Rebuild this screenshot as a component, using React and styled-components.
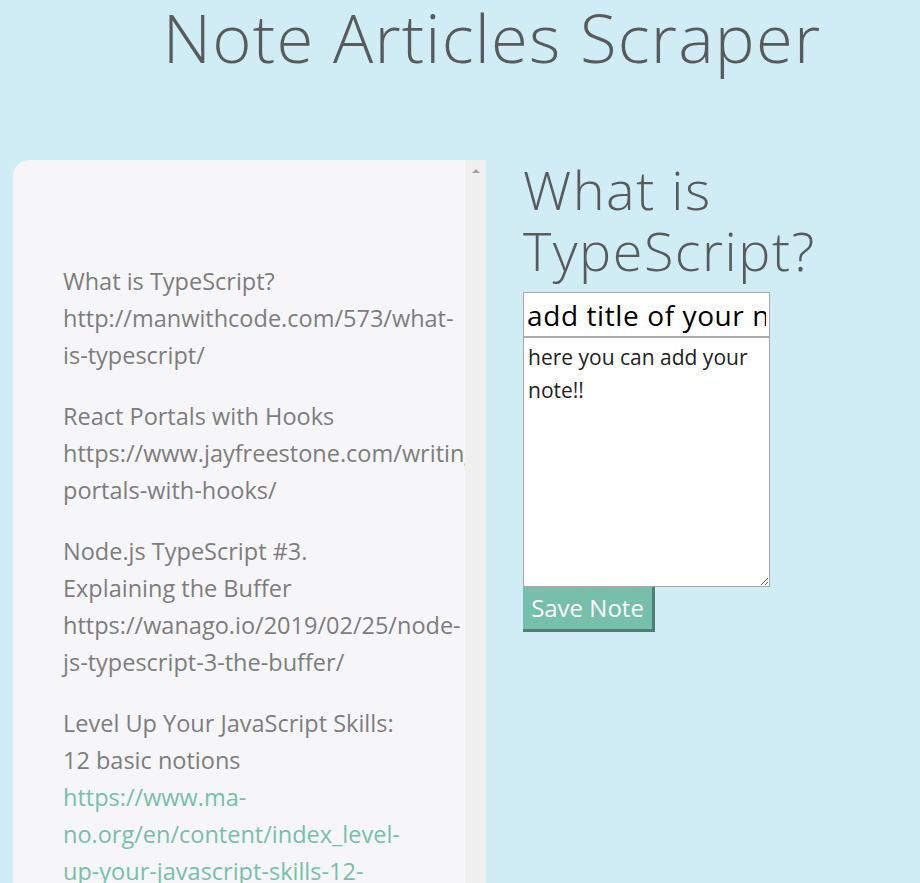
import React from 'react';
import styled, { createGlobalStyle } from 'styled-components';

const GlobalStyle = createGlobalStyle`
body{
    margin: 0;
    background: #d0edf5;
    font-family: "Open Sans", "Noto Sans", sans-serif;
    overflow: hidden;
}
`;

const Page = styled.div`
display: flex;
flex-direction: column;
height: 883px;
overflow: hidden;
`;

const Title = styled.h1`
flex-shrink: 0;
margin: 0;
padding: 0 0 0 64px;
height: 156px;
box-sizing: border-box;
text-align: center;
font-family: "Open Sans", sans-serif;
font-weight: 300;
font-size: 67px;
letter-spacing: 1.2px;
line-height: 74px;
color: #575b5c;
`;

const Main = styled.div`
flex-shrink: 0;
display: flex;
align-items: flex-start;
gap: 37px;
padding-left: 13px;
`;

const Panel = styled.div`
display: flex;
width: 473px;
height: 760px;
margin-top: 4px;
background: #f6f6f8;
border-top-left-radius: 16px;
overflow: hidden;
`;

const List = styled.div`
flex: 1;
padding: 103px 47px 0 50px;
display: flex;
flex-direction: column;
gap: 24px;
min-width: 0;
`;

const Item = styled.div`
font-size: 23.5px;
line-height: 37px;
color: #7d7d7d;
`;

const Url = styled.div`
color: ${props => props.active ? '#76c0ab' : '#7d7d7d'};
`;

const ScrollTrack = styled.div`
width: 21px;
flex-shrink: 0;
background: #f0f0f0;
display: flex;
justify-content: center;
padding-top: 9px;
box-sizing: border-box;
`;

const Arrow = styled.div`
width: 0;
height: 0;
border-left: 4px solid transparent;
border-right: 4px solid transparent;
border-bottom: 4px solid #a3a3a3;
`;

const Editor = styled.div`
display: flex;
flex-direction: column;
`;

const NoteHeading = styled.h2`
margin: 3px 0 11px;
font-family: "Open Sans", sans-serif;
font-weight: 300;
font-size: 54px;
letter-spacing: 1.5px;
line-height: 61px;
color: #575b5c;
width: 320px;
`;

const TitleInput = styled.input`
width: 247px;
height: 45px;
box-sizing: border-box;
border: 1px solid #a9a9a9;
padding: 0 3px;
font-family: "Open Sans", sans-serif;
font-size: 28px;
letter-spacing: 0.6px;
color: #000;
background: #fff;
outline: none;
`;

const NoteArea = styled.textarea`
width: 247px;
height: 250px;
box-sizing: border-box;
border: 1px solid #a9a9a9;
padding: 3px 4px;
font-family: "Open Sans", sans-serif;
font-size: 21px;
line-height: 33px;
color: #222;
resize: both;
outline: none;
`;

const SaveButton = styled.button`
width: 132px;
height: 45px;
box-sizing: border-box;
background: #76c0ab;
color: #fff;
border: none;
border-right: 3px solid #4d7f72;
border-bottom: 3px solid #4d7f72;
font-family: "Open Sans", sans-serif;
font-size: 24px;
padding: 0 0 2px;
text-align: center;
`;

const articles = [
    { title: 'What is TypeScript?', url: 'http://manwithcode.com/573/what-is-typescript/' },
    { title: 'React Portals with Hooks', url: 'https://www.jayfreestone.com/writing/react-portals-with-hooks/' },
    { title: 'Node.js TypeScript #3. Explaining the Buffer', url: 'https://wanago.io/2019/02/25/node-js-typescript-3-the-buffer/' },
    { title: 'Level Up Your JavaScript Skills: 12 basic notions', url: 'https://www.ma-no.org/en/content/index_level-up-your-javascript-skills-12-basic-notions_2366.php', active: true },
    { title: 'Understanding Generators in ES6 JavaScript', url: 'https://www.digitalocean.com/' }
];

const App = () => {
    return (
        <Page>
            <GlobalStyle />
            <Title>Note Articles Scraper</Title>
            <Main>
                <Panel>
                    <List>
                        {articles.map(a => (
                            <Item key={a.url}>
                                {a.title}
                                <Url active={a.active}>{a.url}</Url>
                            </Item>
                        ))}
                    </List>
                    <ScrollTrack><Arrow /></ScrollTrack>
                </Panel>
                <Editor>
                    <NoteHeading>What is TypeScript?</NoteHeading>
                    <TitleInput type="text" placeholder="add title of your note" defaultValue="add title of your note" />
                    <NoteArea defaultValue="here you can add your note!!" />
                    <SaveButton>Save Note</SaveButton>
                </Editor>
            </Main>
        </Page>
    );
};

export default App;
